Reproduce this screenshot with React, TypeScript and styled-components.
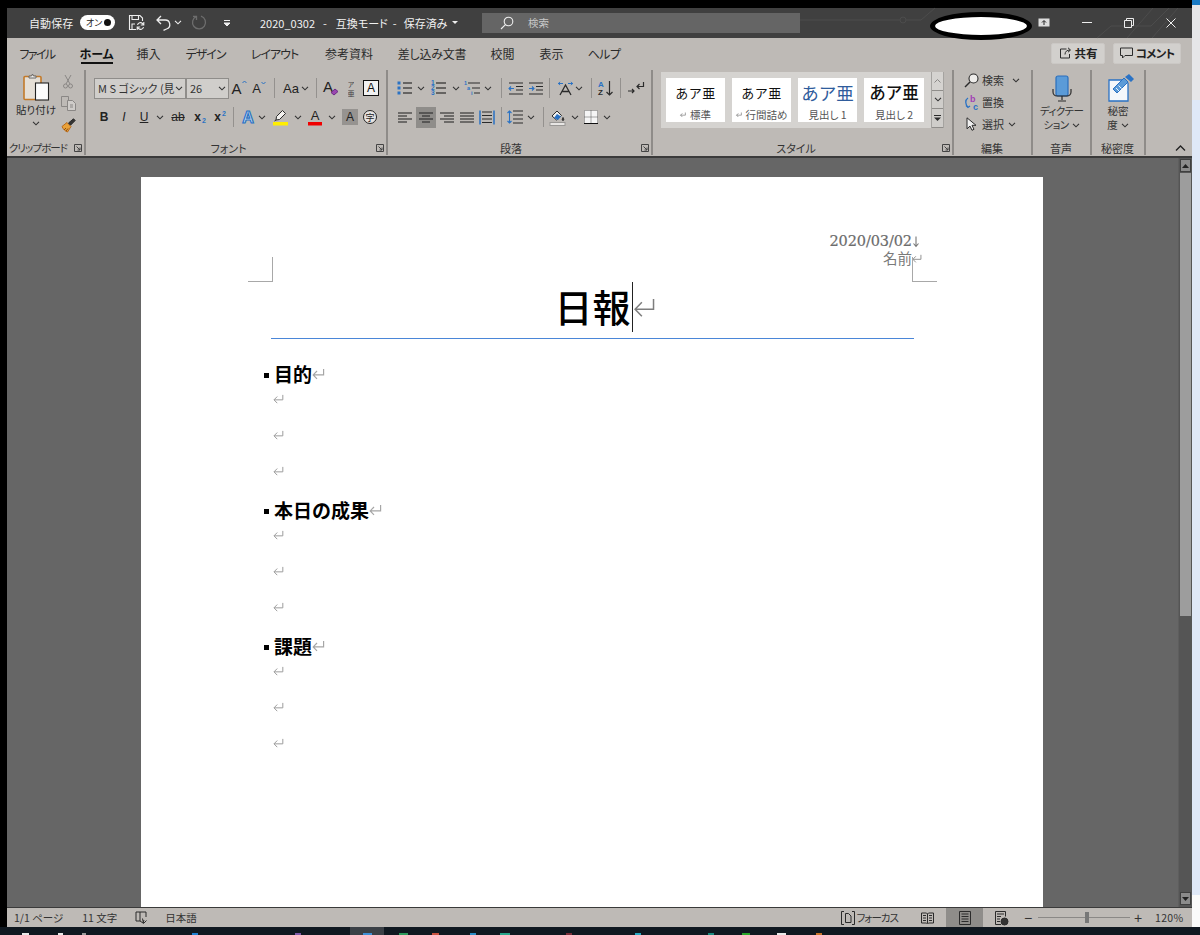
import React from "react";
import styled, { createGlobalStyle } from "styled-components";

const Global = createGlobalStyle`
  html, body { margin: 0; padding: 0; background: #000; }
  body { font-family: "Noto Sans CJK JP", "Noto Sans", sans-serif; font-feature-settings: "palt"; overflow: hidden; }
  svg { display: block; overflow: visible; flex: none; }
`;

const INK = "#2b2b2b";
const BLUE = "#2a72c4";

const Root = styled.div`width: 1200px; height: 935px; display: flex; flex-direction: column; background: #000; overflow: hidden;`;
const Desktop = styled.div`height: 927px; display: flex;`;
const Window = styled.div`width: 1185px; margin: 8px 0 0 7px; display: flex; flex-direction: column; position: relative;`;

/* title bar */
const TitleBar = styled.div`height: 30px; background: #404040; color: #f1f1f1; display: flex; align-items: center; font-size: 11px; padding-left: 22px; position: relative; padding-bottom: 1px; box-sizing: border-box;`;
const Circuit = styled.svg`position: absolute; left: 0; top: 0;`;
const AutoSave = styled.span`width: 44px; white-space: nowrap; font-size: 11px; letter-spacing: .1px;`;
const Toggle = styled.div`width: 35px; height: 15px; margin-left: 7px; border-radius: 8px; background: #fff; display: flex; align-items: center; justify-content: space-between; padding: 0 4px 0 6px; box-sizing: border-box; color: #222; font-size: 9px;`;
const ToggleDot = styled.i`width: 7px; height: 7px; border-radius: 50%; background: #111;`;
const TitleCell = styled.div<{ $w: number; $ml?: number }>`width: ${p => p.$w}px; margin-left: ${p => p.$ml ?? 0}px; display: flex; justify-content: center; align-items: center; height: 20px; position: relative;`;
const DocName = styled.div`margin-left: 29px; width: 222px; display: flex; align-items: center; white-space: nowrap; font-size: 11px; position: relative;`;
const DocPart = styled.span<{ $ml: number }>`margin-left: ${p => p.$ml}px;`;
const SearchBox = styled.div`width: 318px; height: 20px; background: #656565; display: flex; align-items: center; color: #c8c8c8; font-size: 10.5px; padding-left: 18px; box-sizing: border-box; gap: 14px; position: relative;`;
const WinControls = styled.div`margin-left: auto; display: flex; position: relative;`;
const WinCell = styled.div<{ $w: number }>`width: ${p => p.$w}px; height: 20px; display: flex; align-items: center; justify-content: center;`;
const MaskedAccount = styled.div`position: absolute; left: 923px; top: 4px; width: 102px; height: 28px; box-sizing: border-box; border: 5px solid #000; border-radius: 50%; background: #fff;`;

/* tabs */
const TabBar = styled.div`height: 30px; background: #bebab6; display: flex; align-items: center; padding-right: 11px; box-sizing: border-box; color: #262626; font-size: 12px;`;
const Tab = styled.div<{ $w: number; $active?: boolean; $sp?: number }>`width: ${p => p.$w}px; height: 100%; display: flex; align-items: center; justify-content: center; position: relative; letter-spacing: ${p => p.$sp ?? 0}px; font-weight: ${p => p.$active ? 700 : 400}; color: ${p => p.$active ? "#111" : "#2a2a2a"};
  ${p => p.$active && `&::after { content: ""; position: absolute; left: 14px; right: 13px; bottom: 4px; height: 2px; background: #111; }`}
`;
const ShareButton = styled.div<{ $w: number; $ml?: string; $sp?: number }>`width: ${p => p.$w}px; height: 21px; margin-left: ${p => p.$ml ?? "8px"}; box-sizing: border-box; background: #d2d0cd; border: 1px solid #cbc8c5; border-radius: 2px; display: flex; align-items: center; justify-content: center; gap: 3px; font-size: 11.5px; font-weight: 700; color: #222; letter-spacing: ${p => p.$sp ?? 0}px;`;

/* ribbon */
const Ribbon = styled.div`height: 90px; box-sizing: border-box; background: #bebab6; display: flex; border-bottom: 2px solid #3a3a3a; padding-top: 2px; color: #2a2a2a; position: relative;`;
const Group = styled.section<{ $w: number }>`width: ${p => p.$w}px; height: 85px; box-sizing: border-box; border-right: 2px solid #8f8c89; display: flex; flex-direction: column; flex: none;`;
const GroupBody = styled.div<{ $pad?: number }>`flex: 1; min-height: 0; padding-left: ${p => p.$pad ?? 0}px; display: flex;`;
const GroupFoot = styled.div`height: 15px; display: grid; grid-template-columns: 1fr auto 1fr; align-items: center; font-size: 11px; color: #333; padding-right: 1px;`;
const FootLabel = styled.span<{ $left?: number; $sp?: number }>`grid-column: 2; white-space: nowrap; margin-right: ${p => (p.$left ?? 0) * 2}px; letter-spacing: ${p => p.$sp ?? 0}px;`;
const Launcher = styled.span`grid-column: 3; justify-self: end; margin-right: 1px;`;
const ClipFoot = styled(GroupFoot)`grid-template-columns: 1fr auto;`;
const ClipLabel = styled.span`text-align: center; white-space: nowrap; padding-right: 5px; font-size: 10.5px; letter-spacing: -.9px;`;
const ClipLauncher = styled.span`margin-right: 1px;`;

const Stack = styled.div<{ $top?: number; $gap?: number }>`display: flex; flex-direction: column; padding-top: ${p => p.$top ?? 7}px; gap: ${p => p.$gap ?? 7}px;`;
const Row = styled.div`display: flex; align-items: center; height: 22px;`;
const Cell = styled.div<{ $w: number; $ml?: number }>`width: ${p => p.$w}px; margin-left: ${p => p.$ml ?? 0}px; height: 22px; flex: none; display: flex; align-items: center; justify-content: center; font-size: 12px;`;
const ActiveCell = styled(Cell)`background: #8f8d8a; height: 21px;`;
const Sep = styled.i<{ $ml?: number; $mr?: number }>`width: 1px; height: 20px; background: #94918e; margin: 0 ${p => p.$mr ?? 0}px 0 ${p => p.$ml ?? 0}px; flex: none;`;

const FontSelect = styled.div<{ $w: number }>`width: ${p => p.$w}px; height: 21px; box-sizing: border-box; background: #d0cecb; border: 1px solid #8f8d8a; display: flex; align-items: center; justify-content: space-between; padding: 0 2px 0 3px; font-size: 11px; color: #333; white-space: nowrap; overflow: hidden;`;
const GrowA = styled.span<{ $size: number }>`font: 400 ${p => p.$size}px "Liberation Sans", sans-serif; color: #222; display: flex; align-items: flex-start;`;
const CaseLabel = styled.span`font: 400 13px "Liberation Sans", sans-serif; color: #222; display: flex; align-items: center; gap: 2px;`;
const BoxedA = styled.span`width: 14px; height: 14px; border: 1px solid #111; background: #f2f2f2; display: flex; align-items: center; justify-content: center; font: 400 12px "Liberation Sans", sans-serif; color: #111;`;
const Ruby = styled.span`display: flex; flex-direction: column; align-items: center; gap: 1px; font-size: 7px; line-height: 8px; color: #444;`;
const RubyLine = styled.span`display: block; height: 8px; overflow: hidden;`;
const FormatGlyph = styled.span<{ $b?: boolean; $i?: boolean; $u?: boolean; $s?: boolean }>`font: ${p => p.$i ? "italic" : "normal"} ${p => p.$b ? 700 : 400} 12px "Liberation Sans", sans-serif; color: #222; text-decoration: ${p => p.$u ? "underline" : p.$s ? "line-through" : "none"}; display: flex; align-items: baseline;`;
const SubSup = styled.sub<{ $sup?: boolean }>`font-size: 7px; color: ${BLUE}; vertical-align: baseline; position: relative; top: ${p => p.$sup ? -5 : 2}px; margin-left: 1px; font-weight: 700;`;
const GreyA = styled.span`width: 16px; height: 16px; background: #969390; color: #222; display: flex; align-items: center; justify-content: center; font: 400 12px "Liberation Sans", sans-serif;`;
const CircleChar = styled.span`width: 14px; height: 14px; box-sizing: border-box; border: 1px solid #222; border-radius: 50%; display: flex; align-items: center; justify-content: center; font-size: 9px; color: #222; background: #e6e4e2;`;
const PasteColumn = styled.div`width: 58px; padding-top: 1px; display: flex; flex-direction: column; align-items: center; font-size: 10.5px; line-height: 14px; color: #2a2a2a; white-space: nowrap;`;
const ClipTools = styled.div`display: flex; flex-direction: column; width: 16px; margin-left: -5px;`;
const ClipTool = styled.div`height: 22px; display: flex; align-items: center; justify-content: center;`;
const PasteIcon = styled.div`height: 32px; display: flex; align-items: center;`;
const ChevronRow = styled.div`height: 13px; display: flex; align-items: center;`;

const Gallery = styled.div`width: 283px; height: 56px; margin: 2px 0 0 8px; box-sizing: border-box; background: #d5d3d0; display: flex; padding: 6px 0 5px 5px; gap: 7px; position: relative;`;
const StyleCard = styled.div<{ $w?: number }>`width: ${p => p.$w ?? 59}px; height: 44px; background: #fff; display: flex; flex-direction: column; align-items: center; flex: none;`;
const StyleSample = styled.div<{ $color?: string; $size: number; $weight?: number; $sp?: number }>`height: 28px; margin-bottom: 2px; display: flex; align-items: center; color: ${p => p.$color ?? "#111"}; font-size: ${p => p.$size}px; font-weight: ${p => p.$weight ?? 400}; letter-spacing: ${p => p.$sp ?? 0}px; white-space: nowrap; font-feature-settings: normal;`;
const StyleName = styled.div`font-size: 10.5px; color: #555; white-space: nowrap; line-height: 14px; display: flex; align-items: center; gap: 4px;`;
const GalleryScroll = styled.div`position: absolute; right: 0; top: 0; bottom: 0; width: 13px; display: flex; flex-direction: column; box-sizing: border-box; border-left: 1px solid #a5a3a0; border-right: 1px solid #a5a3a0;`;
const GalleryBtn = styled.div<{ $h: number; $on?: boolean }>`height: ${p => p.$h}px; box-sizing: border-box; display: flex; align-items: center; justify-content: center; border-bottom: 1px solid #8f8d8a; background: ${p => p.$on ? "#cfcdca" : "transparent"};`;

const EditStack = styled.div`display: flex; flex-direction: column; padding-left: 10px; margin-top: -1px;`;
const EditRow = styled.div`height: 22px; display: flex; align-items: center; font-size: 11px; color: #333; gap: 4px; white-space: nowrap;`;
const EditIcon = styled.span`width: 14px; display: flex; justify-content: center;`;
const Chev = styled.span<{ $ml?: number }>`margin-left: ${p => p.$ml ?? 0}px; display: flex;`;
const BigTool = styled.div`flex: 1; display: flex; flex-direction: column; align-items: center; padding-top: 2px; font-size: 10.5px; line-height: 14px; color: #333; white-space: nowrap;`;
const BigIcon = styled.div<{ $ml?: number }>`height: 32px; display: flex; align-items: center; margin-left: ${p => p.$ml ?? 0}px;`;
const BigLine = styled.div<{ $sp?: number }>`display: flex; align-items: center; gap: 3px; height: 14px; letter-spacing: ${p => p.$sp ?? 0}px;`;
const Collapse = styled.div`flex: 1; display: flex; align-items: flex-end; justify-content: flex-end; padding: 0 6px 5px 0;`;

/* document */
const Main = styled.div`height: 749px; display: flex; background: #666;`;
const Canvas = styled.div`flex: 1; padding: 19px 0 0 134px; overflow: hidden;`;
const Page = styled.div`width: 902px; height: 730px; background: #fff; box-sizing: border-box; padding: 55px 129px 0 130px; position: relative; color: #000; font-feature-settings: normal;`;
const CropMark = styled.i<{ $right?: boolean }>`position: absolute; top: 80px; width: 25px; height: 25px; box-sizing: border-box; border-bottom: 1px solid #a8a8a8;
  ${p => p.$right ? "left: 771px; border-left: 1px solid #a8a8a8;" : "left: 107px; border-right: 1px solid #a8a8a8;"}`;
const MetaLine = styled.div<{ $mt?: number; $mr: number }>`height: 18px; margin-top: ${p => p.$mt ?? 0}px; display: flex; align-items: center; justify-content: flex-end; margin-right: ${p => p.$mr}px; color: #777;`;
const DateText = styled.span`font: 400 14.5px/16px "DejaVu Serif", serif; letter-spacing: -.1px; color: #6c6c6c; -webkit-text-stroke: .2px #6c6c6c;`;
const NameText = styled.span`font-size: 14.5px; line-height: 16px; color: #7a7a7a;`;
const TitleLine = styled.div`margin-top: 11px; height: 60px; display: flex; justify-content: center; align-items: flex-start;`;
const TitleText = styled.h1`margin: 0; font-size: 38px; font-weight: 500; line-height: 56px; position: relative;`;
const Caret = styled.i`position: absolute; left: 100%; top: 4px; margin-left: 1px; width: 1px; height: 50px; background: #222;`;
const TitleMark = styled.span`position: absolute; left: 100%; top: 19px; margin-left: 2px;`;
const Rule = styled.div`height: 1px; background: #4a86d8; margin: 0 0 21px;`;
const Section = styled.section`display: flex; flex-direction: column;`;
const Heading = styled.h2`margin: 0 0 0 -7px; height: 28px; display: flex; align-items: center; font-size: 19px; font-weight: 700; line-height: 28px;`;
const Bullet = styled.i`width: 5px; height: 5px; background: #000; margin: 3px 5px 0 0; flex: none;`;
const EmptyLine = styled.div`height: 36px; padding: 6px 0 0 2px; box-sizing: border-box;`;

const Scrollbar = styled.div`width: 14px; background: #555; display: flex; flex-direction: column; padding: 1px 1px 2px 1px; box-sizing: border-box; border-left: 1px solid #5e5e5e; gap: 1px;`;
const ScrollBtn = styled.div<{ $auto?: boolean }>`height: 13px; flex: none; box-sizing: border-box; background: #8b8b8b; border: 1px solid #3f3f3f; display: flex; align-items: center; justify-content: center; margin-top: ${p => p.$auto ? "auto" : 0};`;
const ScrollThumb = styled.div`height: 443px; background: #9d9d9d; flex: none;`;

/* status */
const StatusBar = styled.div`height: 20px; background: #bebab6; border-top: 1px solid #3a3a3a; box-sizing: border-box; display: flex; align-items: center; font-size: 10.5px; color: #333; padding-left: 7px; white-space: nowrap;`;
const StatusItem = styled.span<{ $ml: number; $mr?: number; $sp?: number }>`margin: 0 ${p => p.$mr ?? 0}px 0 ${p => p.$ml}px; display: flex; align-items: center; gap: 2px; letter-spacing: ${p => p.$sp ?? 0}px;`;
const StatusRight = styled.div`margin-left: auto; display: flex; align-items: center; height: 100%;`;
const ViewBtn = styled.div<{ $w: number; $on?: boolean }>`width: ${p => p.$w}px; height: 100%; display: flex; align-items: center; justify-content: center; background: ${p => p.$on ? "#8f8d8a" : "transparent"};`;
const ZoomTrack = styled.div`width: 92px; height: 1px; background: #8a8886; position: relative; margin: 0 0 0 2px;`;
const ZoomThumb = styled.i`position: absolute; left: 47px; top: -5px; width: 4px; height: 11px; background: #777;`;
const ZoomPct = styled.span`margin-left: 9px; width: 37px; letter-spacing: .3px;`;
const ZoomSign = styled.span`width: 16px; text-align: center; font-size: 14px; line-height: 14px; font-family: "Liberation Sans", sans-serif;`;

/* surroundings */
const RightStrip = styled.div`width: 8px; display: flex; flex-direction: column;`;
const Strip = styled.div<{ $h?: number; $c: string }>`${p => p.$h ? `height:${p.$h}px;` : "flex:1;"} background: ${p => p.$c};`;
const Taskbar = styled.svg`display: block;`;

/* icons */
type SP = { w: number; h: number; c?: string; sw?: number; children?: React.ReactNode };
const S = ({ w, h, c = INK, sw = 1, children }: SP) => (
  <svg width={w} height={h} viewBox={`0 0 ${w} ${h}`} fill="none" stroke={c} strokeWidth={sw}>{children}</svg>
);
const Chevron = ({ c = "#333" }: { c?: string }) => <S w={8} h={5} c={c} sw={1.1}><path d="M1 .8l3 3 3-3" /></S>;
const ReturnMark = ({ size = 11, c = "#9b9b9b", sw = 1.1 }: { size?: number; c?: string; sw?: number }) => (
  <svg width={size} height={size * 0.9} viewBox="0 0 12 11" fill="none" stroke={c} strokeWidth={sw}>
    <path d="M10.8 1v5.5H1M4.6 2.8 1 6.5l3.6 3.7" />
  </svg>
);
const LauncherIcon = () => <S w={8} h={8} c="#444"><path d="M.5 7.5v-7h7v7zM2.5 2.5l3.5 3.5M6 3.5V6H3.5" /></S>;

const SaveIcon = () => (
  <S w={17} h={17} c="#eee" sw={1.1}>
    <path d="M8 15.5H1.5v-14h10.5l2.5 2.5v3M4 1.5v4h6.5v-4M4 15v-5h3" />
    <path d="M9.5 11a3 3 0 0 1 5-1.5l1 1M15.8 8v3h-3M15.5 13a3 3 0 0 1-5 1.5l-1-1M9.2 16v-3h3" />
  </S>
);
const UndoIcon = () => <S w={15} h={16} c="#eee" sw={1.3}><path d="M5 1 1 5l4 4M1.3 5H9a4.6 4.6 0 0 1 1.5 9l-3 1.4" /></S>;
const RedoIcon = () => <S w={15} h={15} c="#6d6d6d" sw={1.3}><path d="M9 1.2a6.5 6.5 0 1 1-4.5.2M4.500 5V1.400H1" /></S>;
const QatIcon = () => <S w={8} h={8} c="#eee"><path d="M1 1.500h6" /><path d="M1 4l3 3 3-3z" fill="#eee" /></S>;
const QatTriangle = () => <S w={6} h={3} c="#eee"><path d="M0 0h6L3 3z" fill="#eee" stroke="none" /></S>;
const TitleSearch = () => <S w={14} h={14} c="#eee" sw={1.1}><circle cx="8.500" cy="5.500" r="4.300" /><path d="M5.400 8.600 1 13" /></S>;
const DisplayIcon = () => <S w={12} h={9} c="#eee"><rect x=".5" y=".5" width="11" height="8" fill="#ddd" stroke="none" /><path d="M6 7V3M4 4.500l2-2 2 2" stroke="#222" /></S>;
const MinIcon = () => <S w={10} h={1} c="#eee"><path d="M0 .5h10" /></S>;
const RestoreIcon = () => <S w={10} h={10} c="#eee"><path d="M.5 2.500h7v7h-7zM2.500 2.500v-2h7v7h-2" /></S>;
const CloseIcon = () => <S w={10} h={10} c="#eee"><path d="M.5.500l9 9M9.500.500l-9 9" /></S>;

const ShareIcon = () => <S w={13} h={12}><path d="M7.500 2H1.500v9h9V7M6 7.500c0-3 2-4.500 5-4.500M9 .8 11.500 3 9 5.200" /></S>;
const CommentIcon = () => <S w={13} h={12}><path d="M.5 1h12v7.500H5L2.500 11V8.500h-2z" /></S>;

const PasteSvg = () => (
  <S w={27} h={28}>
    <rect x="1" y="3.500" width="17" height="23" rx="1" stroke="#c37a2a" strokeWidth="1.600" fill="#e5dfd6" />
    <path d="M6 5V3h2.500l1-2 1 2H13v2z" fill="#f0efed" stroke="#666" />
    <rect x="12.500" y="10" width="13" height="17" fill="#fbfbfb" stroke="#222" strokeWidth="1.100" />
  </S>
);
const CutIcon = () => <S w={10} h={15} c="#8a8785" sw={1}><path d="M2 1l5 9M8 1 3 10" /><circle cx="2.500" cy="12" r="2" /><circle cx="7.500" cy="12" r="2" /></S>;
const CopyIcon = () => <S w={15} h={15} c="#8a8785"><path d="M.5.500h7v10h-7z" /><path d="M6.500 4.500h5l3 3v7h-8z" fill="#cfccc9" /><path d="M9 9h3M9 11h3" /></S>;
const BrushIcon = () => (
  <S w={15} h={15}>
    <path d="M1 8.500 6 4.500l4 4-3.500 5.500c-2-.5-4.500-3-5.500-5.500z" fill="#e9a23a" stroke="#b96b1c" />
    <path d="M3 12l2-2M5 13l2-2.500" stroke="#8a4d12" />
    <path d="M7.500 5 12.500.800l1.700 1.700L9.500 7.200z" fill="#333" />
  </S>
);

const ColorA = ({ bar, outline }: { bar?: string; outline?: boolean }) => (
  <svg width="16" height="17" viewBox="0 0 16 17">
    {outline
      ? <text x="8" y="14" textAnchor="middle" fontFamily="Liberation Sans" fontWeight="700" fontSize="16" fill="#cfe2f6" stroke={BLUE} strokeWidth="1.200">A</text>
      : <text x="8" y="11" textAnchor="middle" fontFamily="Liberation Sans" fontSize="13" fill="#222">A</text>}
    {bar && <rect x="1" y="13" width="14" height="3.500" fill={bar} />}
  </svg>
);
const HighlightIcon = () => (
  <S w={15} h={17}>
    <path d="M3 11 3.500 7.500 9.500 1.500l3 3-6 6z" fill="#f3f1ee" />
    <path d="M3 11l-1.500 1" />
    <rect x="0" y="13" width="15" height="3.500" fill="#ffee00" stroke="none" />
  </S>
);
const ClearFormat = () => (
  <svg width="18" height="18" viewBox="0 0 18 18" fill="none">
    <text x="1" y="13" fontFamily="Liberation Sans" fontSize="15" fill="#222">A</text>
    <path d="M9 13.500l4-3.500 3 2.500-4 3.500z" fill="#9a47b0" stroke="#6d2a85" />
  </svg>
);

const Bullets = () => (
  <S w={15} h={14}>
    {[2, 7, 12].map(y => <React.Fragment key={y}><rect x=".5" y={y - 1.500} width="3" height="3" fill={BLUE} stroke="none" /><path d={`M6 ${y}h9`} strokeWidth="1.200" /></React.Fragment>)}
  </S>
);
const Numbers = () => (
  <svg width="15" height="15" viewBox="0 0 15 15" fill="none" stroke={INK}>
    {[[1, 3], [2, 8], [3, 13]].map(([n, y]) => <React.Fragment key={n}>
      <text x="0" y={y + 1} fontSize="6.500" fontWeight="700" fontFamily="Liberation Sans" fill={BLUE} stroke="none">{n}</text>
      <path d={`M5 ${y - 1}h10`} strokeWidth="1.200" /></React.Fragment>)}
  </svg>
);
const MultiList = () => (
  <svg width="16" height="15" viewBox="0 0 16 15" fill="none" stroke={INK}>
    <text x="0" y="4" fontSize="5.500" fontWeight="700" fontFamily="Liberation Sans" fill={BLUE} stroke="none">1</text>
    <text x="3" y="9" fontSize="5.500" fontWeight="700" fontFamily="Liberation Sans" fill={BLUE} stroke="none">a</text>
    <text x="7" y="14" fontSize="5.500" fontWeight="700" fontFamily="Liberation Sans" fill={BLUE} stroke="none">i</text>
    <path d="M4 2h12M8 7h8M10 12h6" strokeWidth="1.200" />
  </svg>
);
const Indent = ({ right }: { right?: boolean }) => (
  <S w={14} h={13} sw={1.100}>
    <path d="M0 1h14M7 4.500h7M7 8h7M0 12h14" />
    <path d={right ? "M0 6.500h5M3 4.500l2 2-2 2" : "M5 6.500H0M2 4.500l-2 2 2 2"} stroke={BLUE} />
  </S>
);
const TextDir = () => (
  <svg width="15" height="15" viewBox="0 0 15 15" fill="none" stroke={INK}>
    <path d="M2 14 7.500 4 13 14M4 10.500h7" strokeWidth="1.300" />
    <path d="M0 2.500h5M2 .800.500 2.500 2 4.200M10 2.500h5M13 .800l1.500 1.700L13 4.200" stroke={BLUE} />
  </svg>
);
const SortIcon = () => (
  <svg width="16" height="16" viewBox="0 0 16 16" fill="none">
    <text x="0" y="7" fontSize="8" fontWeight="700" fontFamily="Liberation Sans" fill={BLUE}>A</text>
    <text x="0" y="15" fontSize="8" fontWeight="700" fontFamily="Liberation Sans" fill={INK}>Z</text>
    <path d="M11.500 1v14M8.500 12l3 3 3-3" stroke={INK} strokeWidth="1.200" />
  </svg>
);
const ParaMark = () => <S w={16} h={13} sw={1.200}><path d="M0 9h6M4 7l2 2-2 2" /><path d="M15.500 0v4.500H9M11.500 2 9 4.500 11.500 7" /></S>;
const AlignIcon = ({ kind }: { kind: string }) => {
  const short = kind === "c" ? [3, 11] : kind === "r" ? [4, 14] : kind === "j" ? [0, 14] : [0, 9];
  const rows = [[0, 14], short, [0, 14], short];
  return <S w={14} h={11} sw={1.100}>{rows.map(([a, b], i) => <path key={i} d={`M${a} ${i * 3 + 1}H${b}`} />)}</S>;
};
const Distribute = () => <S w={16} h={15} sw={1.100}><path d="M1 .500v14M15 .500v14" stroke={BLUE} strokeWidth="1.500" /><path d="M3 2h10M3 5.500h10M3 9h10M3 12.500h10" /></S>;
const LineSpacing = () => <S w={16} h={14} sw={1.100}><path d="M6 1h10M6 5h10M6 9h10M6 13h10" /><path d="M2.500 1v12M.5 3l2-2 2 2M.5 11l2 2 2-2" stroke={BLUE} /></S>;
const FillIcon = () => (
  <S w={15} h={17}>
    <path d="M2 7l5-5 4.500 4.500-5 4.500z" fill="#f3f1ee" />
    <path d="M7 5l4 2.500-3 3.500-4-2z" fill="#2a72c4" stroke="none" />
    <path d="M13 8.500c-1 1.500-1 3 0 3s1-1.500 0-3z" fill={INK} />
    <rect x="0" y="13.500" width="15" height="3" fill="#e8e6e4" stroke="#9a9896" />
  </S>
);
const BorderIcon = () => (
  <svg width="14" height="14" viewBox="0 0 14 14" fill="#f5f5f5" stroke="#777">
    <rect x=".5" y=".5" width="13" height="13" strokeDasharray="1 1" />
    <path d="M7 .500v13M.5 7h13" stroke="#555" strokeDasharray="1 1" />
    <path d="M0 13.500h14" stroke="#111" />
  </svg>
);
const SearchBig = () => <S w={15} h={15} sw={1.100}><circle cx="9.500" cy="5.500" r="4.500" fill="#eeecea" /><path d="M6 9 1 14" strokeWidth="1.500" /></S>;
const ReplaceIcon = () => (
  <svg width="15" height="15" viewBox="0 0 15 15" fill="none">
    <text x="6" y="7" fontSize="9" fontFamily="Liberation Sans" fontWeight="700" fill="#a23fb5">b</text>
    <text x="9" y="15" fontSize="9" fontFamily="Liberation Sans" fontWeight="700" fill="#2a72c4">c</text>
    <path d="M4 3C1 5 1 9 4 12M2 10.500 4 12.500 6 11" stroke={BLUE} strokeWidth="1.300" />
  </svg>
);
const CursorIcon = () => <S w={11} h={14}><path d="M1 .8v11l3-2.700 2 4.200 2-1-2-4h4z" fill="#f0f0f0" /></S>;
const MicIcon = () => (
  <S w={20} h={27}>
    <rect x="4" y="1" width="12" height="20" rx="2" fill="#5b9bd8" stroke="#2a6fbd" strokeWidth="1.200" />
    <path d="M1 14v3a4 4 0 0 0 4 4h10a4 4 0 0 0 4-4v-3M10 21v4M6 26h8" strokeWidth="1.200" />
  </S>
);
const SensIcon = () => (
  <S w={27} h={28}>
    <path d="M1 6h14l5 3v18H1z" fill="#f5f8fb" stroke={BLUE} strokeWidth="1.300" />
    <path d="M5 15 16 4l4 4L9 19z" fill="#5b9bd8" stroke={BLUE} />
    <path d="M8 14l3 3M10.500 11.500l3 3" stroke="#eaf3fb" />
    <path d="M17 3l4-3 5 5-3 3z" fill={BLUE} stroke="none" />
  </S>
);
const BookIcon = () => <S w={12} h={13}><path d="M1 1h4v9H1zM5 1h6v5M5 10l3 2 1-3M7.500 7.500l1 5 3-3" /></S>;
const FocusIcon = () => <S w={14} h={14}><path d="M3 .5H.5v13H3M11 .500h2.500v13H11M4.500 11.500v-9h3l2.500 2.500v6.500z" /></S>;
const ReadIcon = () => <S w={13} h={12}><path d="M.5 1h5l1 1 1-1h5v10h-5l-1 1-1-1h-5zM6.500 2v9M2 3.500h3M2 6h3M2 8.500h3M8 3.500h3M8 6h3M8 8.500h3" /></S>;
const PrintIcon = () => <S w={12} h={14}><path d="M.5.500h11v13H.5zM2.500 3h7M2.500 5.500h7M2.500 8h7M2.500 10.500h7" /></S>;
const WebIcon = () => <S w={13} h={14}><path d="M6 13.500H.5V.500h10v5M2 3h7M2 5.500h4M2 8h3M2 10.500h3" /><circle cx="9.500" cy="10.500" r="3.500" fill="#333" /></S>;
const Tri = ({ down }: { down?: boolean }) => <S w={7} h={4} c="#222"><path d={down ? "M0 0h7L3.500 4z" : "M0 4h7L3.500 0z"} fill="#222" stroke="none" /></S>;

const TABS: [string, number, boolean?, number?][] = [["ファイル", 60, false, -1.6], ["ホーム", 59, true], ["挿入", 45], ["デザイン", 69, false, -1], ["レイアウト", 69, false, -1], ["参考資料", 80], ["差し込み文書", 86, false, -.2], ["校閲", 55], ["表示", 43], ["ヘルプ", 62, false, -.5]];
const SLIVERS: [number, number, string][] = [[22, 7, "#e8e8e8"], [58, 5, "#e8e8e8"], [82, 4, "#9a9a9a"], [192, 6, "#1f7fd0"], [295, 6, "#7e5aa8"], [363, 9, "#3f8fd6"], [399, 9, "#2e9a5c"], [432, 7, "#c8513f"], [470, 6, "#2a8bc4"], [500, 10, "#27a58a"], [566, 6, "#7a2f3a"], [635, 6, "#27a8c4"], [708, 6, "#1d8a80"], [742, 8, "#2aa52a"], [777, 9, "#e8e8e8"], [816, 6, "#c8742a"]];
const SECTIONS = ["目的", "本日の成果", "課題"];

export default function App() {
  return (
    <Root>
      <Global />
      <Desktop>
        <Window>
          <TitleBar>
            <Circuit width="1185" height="30" viewBox="0 0 1185 30" fill="none" stroke="#4c4c4c">
              <path d="M793 12h100M899 12h15l14-12M1090 30l14-12h40l18-18M1120 30l26-30M1145 30l26-30" />
              <circle cx="896" cy="12" r="3" />
            </Circuit>
            <AutoSave>自動保存</AutoSave>
            <Toggle>オン<ToggleDot /></Toggle>
            <TitleCell $w={17} $ml={13}><SaveIcon /></TitleCell>
            <TitleCell $w={15} $ml={11}><UndoIcon /></TitleCell>
            <TitleCell $w={8} $ml={3}><Chevron c="#eee" /></TitleCell>
            <TitleCell $w={15} $ml={10}><RedoIcon /></TitleCell>
            <TitleCell $w={8} $ml={16}><QatIcon /></TitleCell>
            <DocName>
              2020_0302
              <DocPart $ml={8}>-</DocPart>
              <DocPart $ml={9}>互換モード</DocPart>
              <DocPart $ml={5}>-</DocPart>
              <DocPart $ml={7}>保存済み</DocPart>
              <Chev $ml={5}><QatTriangle /></Chev>
            </DocName>
            <SearchBox><TitleSearch /><span>検索</span></SearchBox>
            <WinControls>
              <WinCell $w={43}><DisplayIcon /></WinCell>
              <WinCell $w={43}><MinIcon /></WinCell>
              <WinCell $w={42}><RestoreIcon /></WinCell>
              <WinCell $w={42}><CloseIcon /></WinCell>
            </WinControls>
          </TitleBar>
          <MaskedAccount />
          <TabBar>
            {TABS.map(([t, w, a, sp]) => <Tab key={t} $w={w} $active={a} $sp={sp}>{t}</Tab>)}
            <ShareButton $w={54} $ml="auto"><ShareIcon />共有</ShareButton>
            <ShareButton $w={68} $sp={-.8}><CommentIcon />コメント</ShareButton>
          </TabBar>
          <Ribbon>
            <Group $w={79}>
              <GroupBody $pad={0}>
                <PasteColumn>
                  <PasteIcon><PasteSvg /></PasteIcon>
                  貼り付け
                  <ChevronRow><Chevron /></ChevronRow>
                </PasteColumn>
                <ClipTools>
                  <ClipTool><CutIcon /></ClipTool>
                  <ClipTool><CopyIcon /></ClipTool>
                  <ClipTool><BrushIcon /></ClipTool>
                </ClipTools>
              </GroupBody>
              <ClipFoot><ClipLabel>クリップボード</ClipLabel><ClipLauncher><LauncherIcon /></ClipLauncher></ClipFoot>
            </Group>
            <Group $w={302}>
              <GroupBody $pad={8}>
                <Stack>
                  <Row>
                    <FontSelect $w={92}><span>M S ゴシック (見</span><Chevron /></FontSelect>
                    <FontSelect $w={43}><span>26</span><Chevron /></FontSelect>
                    <Cell $w={20}><GrowA $size={15}>A<S w={5} h={4} c={BLUE}><path d="M.5 3 2.500 1l2 2" /></S></GrowA></Cell>
                    <Cell $w={20}><GrowA $size={13}>A<S w={5} h={4} c={BLUE}><path d="M.5 1l2 2 2-2" /></S></GrowA></Cell>
                    <Sep $ml={5} $mr={4} />
                    <Cell $w={34}><CaseLabel>Aa<Chevron /></CaseLabel></Cell>
                    <Sep $ml={3} $mr={2} />
                    <Cell $w={24}><ClearFormat /></Cell>
                    <Cell $w={16}><Ruby><RubyLine>ア</RubyLine><RubyLine>亜</RubyLine></Ruby></Cell>
                    <Cell $w={24}><BoxedA>A</BoxedA></Cell>
                  </Row>
                  <Row>
                    <Cell $w={20}><FormatGlyph $b>B</FormatGlyph></Cell>
                    <Cell $w={20}><FormatGlyph $i>I</FormatGlyph></Cell>
                    <Cell $w={20}><FormatGlyph $u>U</FormatGlyph></Cell>
                    <Cell $w={12}><Chevron /></Cell>
                    <Cell $w={24}><FormatGlyph $s>ab</FormatGlyph></Cell>
                    <Cell $w={20}><FormatGlyph $b>x<SubSup>2</SubSup></FormatGlyph></Cell>
                    <Cell $w={20}><FormatGlyph $b>x<SubSup $sup>2</SubSup></FormatGlyph></Cell>
                    <Sep $ml={3} $mr={4} />
                    <Cell $w={19}><ColorA outline /></Cell>
                    <Cell $w={10}><Chevron /></Cell>
                    <Cell $w={26}><HighlightIcon /></Cell>
                    <Cell $w={10}><Chevron /></Cell>
                    <Cell $w={24}><ColorA bar="#f00000" /></Cell>
                    <Cell $w={10}><Chevron /></Cell>
                    <Cell $w={16} $ml={5}><GreyA>A</GreyA></Cell>
                    <Cell $w={24}><CircleChar>字</CircleChar></Cell>
                  </Row>
                </Stack>
              </GroupBody>
              <GroupFoot><FootLabel $left={7}>フォント</FootLabel><Launcher><LauncherIcon /></Launcher></GroupFoot>
            </Group>
            <Group $w={265}>
              <GroupBody $pad={5}>
                <Stack>
                  <Row>
                    <Cell $w={23}><Bullets /></Cell>
                    <Cell $w={10}><Chevron /></Cell>
                    <Cell $w={25}><Numbers /></Cell>
                    <Cell $w={10}><Chevron /></Cell>
                    <Cell $w={22}><MultiList /></Cell>
                    <Cell $w={10}><Chevron /></Cell>
                    <Sep $ml={8} $mr={7} />
                    <Cell $w={14}><Indent /></Cell>
                    <Cell $w={26}><Indent right /></Cell>
                    <Sep $mr={6} />
                    <Cell $w={18}><TextDir /></Cell>
                    <Cell $w={10}><Chevron /></Cell>
                    <Sep $ml={7} $mr={4} />
                    <Cell $w={20}><SortIcon /></Cell>
                    <Sep $ml={4} $mr={5} />
                    <Cell $w={20}><ParaMark /></Cell>
                  </Row>
                  <Row>
                    <Cell $w={23}><AlignIcon kind="l" /></Cell>
                    <ActiveCell $w={20}><AlignIcon kind="c" /></ActiveCell>
                    <Cell $w={21}><AlignIcon kind="r" /></Cell>
                    <Cell $w={20}><AlignIcon kind="j" /></Cell>
                    <Cell $w={20}><Distribute /></Cell>
                    <Sep $ml={4} $mr={1} />
                    <Cell $w={23}><LineSpacing /></Cell>
                    <Cell $w={10}><Chevron /></Cell>
                    <Sep $ml={7} $mr={1} />
                    <Cell $w={25}><FillIcon /></Cell>
                    <Cell $w={10}><Chevron /></Cell>
                    <Cell $w={22}><BorderIcon /></Cell>
                    <Cell $w={10}><Chevron /></Cell>
                  </Row>
                </Stack>
              </GroupBody>
              <GroupFoot><FootLabel $left={8}>段落</FootLabel><Launcher><LauncherIcon /></Launcher></GroupFoot>
            </Group>
            <Group $w={301}>
              <GroupBody>
                <Gallery>
                  <StyleCard><StyleSample $size={13} $sp={0.5}>あア亜</StyleSample><StyleName><ReturnMark size={6} c="#555" />標準</StyleName></StyleCard>
                  <StyleCard><StyleSample $size={13} $sp={0.5}>あア亜</StyleSample><StyleName><ReturnMark size={6} c="#555" />行間詰め</StyleName></StyleCard>
                  <StyleCard><StyleSample $size={17.5} $color="#2f5c9c">あア亜</StyleSample><StyleName>見出し 1</StyleName></StyleCard>
                  <StyleCard $w={60}><StyleSample $size={16.5} $weight={500}>あア亜</StyleSample><StyleName>見出し 2</StyleName></StyleCard>
                  <GalleryScroll>
                    <GalleryBtn $h={19}><S w={7} h={4} c="#8a8886"><path d="M.5 3.500l3-3 3 3" /></S></GalleryBtn>
                    <GalleryBtn $h={18} $on><Chevron /></GalleryBtn>
                    <GalleryBtn $h={19} $on><S w={7} h={6}><path d="M0 .5h7" /><path d="M0 2.500h7L3.500 6z" fill={INK} stroke="none" /></S></GalleryBtn>
                  </GalleryScroll>
                </Gallery>
              </GroupBody>
              <GroupFoot><FootLabel $left={6}>スタイル</FootLabel><Launcher><LauncherIcon /></Launcher></GroupFoot>
            </Group>
            <Group $w={79}>
              <GroupBody>
                <EditStack>
                  <EditRow><EditIcon><SearchBig /></EditIcon>検索<Chev $ml={4}><Chevron /></Chev></EditRow>
                  <EditRow><EditIcon><ReplaceIcon /></EditIcon>置換</EditRow>
                  <EditRow><EditIcon><CursorIcon /></EditIcon>選択<Chev><Chevron /></Chev></EditRow>
                </EditStack>
              </GroupBody>
              <GroupFoot><FootLabel>編集</FootLabel></GroupFoot>
            </Group>
            <Group $w={59}>
              <GroupBody>
                <BigTool>
                  <BigIcon><MicIcon /></BigIcon>
                  <BigLine $sp={-.6}>ディクテー</BigLine>
                  <BigLine $sp={-.6}>ション<Chevron /></BigLine>
                </BigTool>
              </GroupBody>
              <GroupFoot><FootLabel>音声</FootLabel></GroupFoot>
            </Group>
            <Group $w={54}>
              <GroupBody>
                <BigTool>
                  <BigIcon $ml={7}><SensIcon /></BigIcon>
                  <BigLine>秘密</BigLine>
                  <BigLine>度<Chevron /></BigLine>
                </BigTool>
              </GroupBody>
              <GroupFoot><FootLabel>秘密度</FootLabel></GroupFoot>
            </Group>
            <Collapse><S w={11} h={6} c="#222" sw={1.300}><path d="M1 5.500l4.500-4.500 4.500 4.500" /></S></Collapse>
          </Ribbon>
          <Main>
            <Canvas>
              <Page>
                <CropMark />
                <CropMark $right />
                <MetaLine $mr={-6}><DateText>2020/03/02</DateText><S w={8} h={11} c="#777" sw={1.100}><path d="M4 .5v9.500M1.500 7.500 4 10.500l2.500-3" /></S></MetaLine>
                <MetaLine $mt={-1} $mr={-8}><NameText>名前</NameText><ReturnMark size={10} c="#888" /></MetaLine>
                <TitleLine>
                  <TitleText>日報<Caret /><TitleMark><ReturnMark size={23} c="#7e7e7e" sw={.8} /></TitleMark></TitleText>
                </TitleLine>
                <Rule />
                {SECTIONS.map(s => (
                  <Section key={s}>
                    <Heading><Bullet />{s}<ReturnMark size={13} c="#a5a5a5" /></Heading>
                    {[0, 1, 2].map(i => <EmptyLine key={i}><ReturnMark size={11} /></EmptyLine>)}
                  </Section>
                ))}
              </Page>
            </Canvas>
            <Scrollbar>
              <ScrollBtn><Tri /></ScrollBtn>
              <ScrollThumb />
              <ScrollBtn $auto><Tri down /></ScrollBtn>
            </Scrollbar>
          </Main>
          <StatusBar>
            <span>1/1 ページ</span>
            <StatusItem $ml={19}>11 文字</StatusItem>
            <StatusItem $ml={18}><BookIcon /></StatusItem>
            <StatusItem $ml={18}>日本語</StatusItem>
            <StatusRight>
              <StatusItem $ml={0} $mr={10} $sp={-1}><FocusIcon />フォーカス</StatusItem>
              <ViewBtn $w={38}><ReadIcon /></ViewBtn>
              <ViewBtn $w={37} $on><PrintIcon /></ViewBtn>
              <ViewBtn $w={37}><WebIcon /></ViewBtn>
              <ZoomSign>−</ZoomSign>
              <ZoomTrack><ZoomThumb /></ZoomTrack>
              <ZoomSign>+</ZoomSign>
              <ZoomPct>120%</ZoomPct>
            </StatusRight>
          </StatusBar>
        </Window>
        <RightStrip>
          <Strip $h={5} $c="#1a7ac4" />
          <Strip $h={95} $c="#e6e6e8" />
          <Strip $c="#dfe8f7" />
          <Strip $h={32} $c="#fafafa" />
        </RightStrip>
      </Desktop>
      <Taskbar width="1200" height="8" viewBox="0 0 1200 8">
        <rect width="1200" height="8" fill="#101820" />
        <rect x="350" width="34" height="8" fill="#3b4046" />
        {SLIVERS.map(([x, w, c]) => <rect key={x} x={x} y="6" width={w} height="2" fill={c} />)}
      </Taskbar>
    </Root>
  );
}
